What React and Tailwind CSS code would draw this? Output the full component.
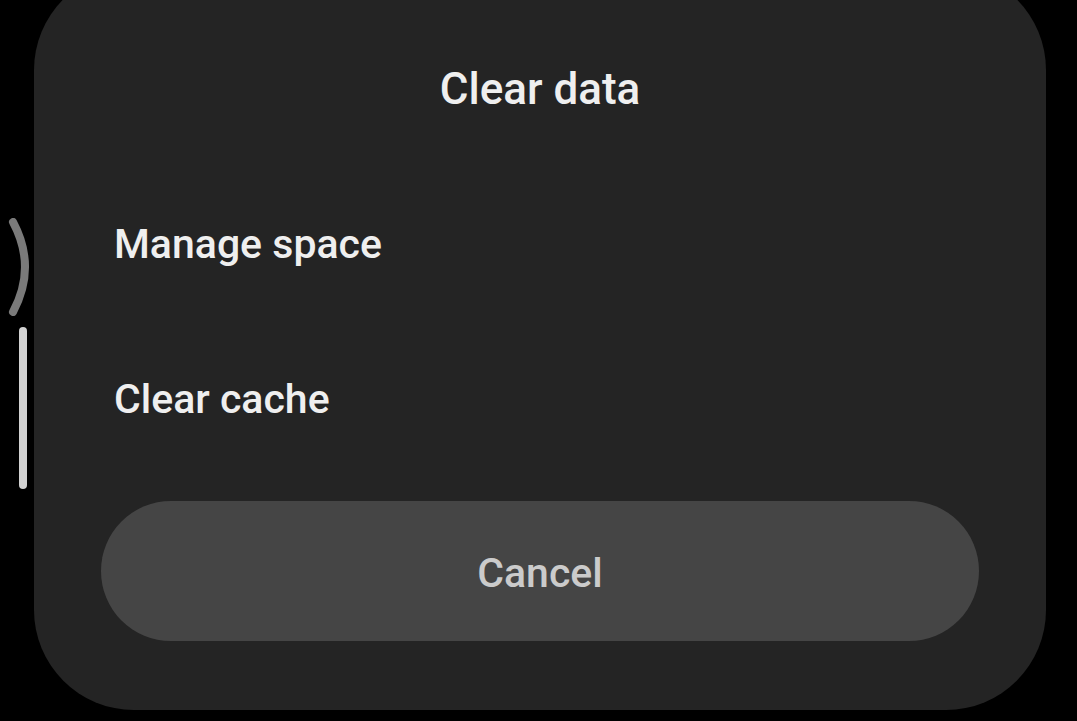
export default function App() {
  return (
    <div
      className="w-[1077px] h-[721px] bg-black overflow-hidden flex"
      style={{ fontFamily: "Roboto, 'Noto Sans', sans-serif" }}
    >
      {/* scroll indicators */}
      <div className="w-[34px] shrink-0 flex flex-col pt-[218px]">
        <svg width="34" height="98" viewBox="0 0 34 98" className="block">
          <path d="M13 4 Q37 49 13 94" fill="none" stroke="#7a7a7a" strokeWidth="8" strokeLinecap="round" />
        </svg>
        <div className="mt-[11px] ml-[19px] w-[8px] h-[162px] rounded-full bg-[#d2d2d2]" />
      </div>

      {/* dialog */}
      <div className="mt-[-30px] w-[1012px] h-[740px] shrink-0 rounded-[100px] bg-[#242424] flex flex-col pt-[95px]">
        <h1 className="text-center text-[44px] leading-[48px] font-medium text-[#efefef]">Clear data</h1>
        <div className="mt-[107px] pl-[80px] text-[41px] leading-[48px] font-medium text-[#efefef]">Manage space</div>
        <div className="mt-[107px] pl-[80px] text-[41px] leading-[48px] font-medium text-[#efefef]">Clear cache</div>
        <div className="mt-[78px] px-[67px]">
          <button className="w-full h-[140px] rounded-full bg-[#454545] text-[41px] leading-[48px] font-medium text-[#cbcbcb] pt-[3px]">
            Cancel
          </button>
        </div>
      </div>
    </div>
  );
}
